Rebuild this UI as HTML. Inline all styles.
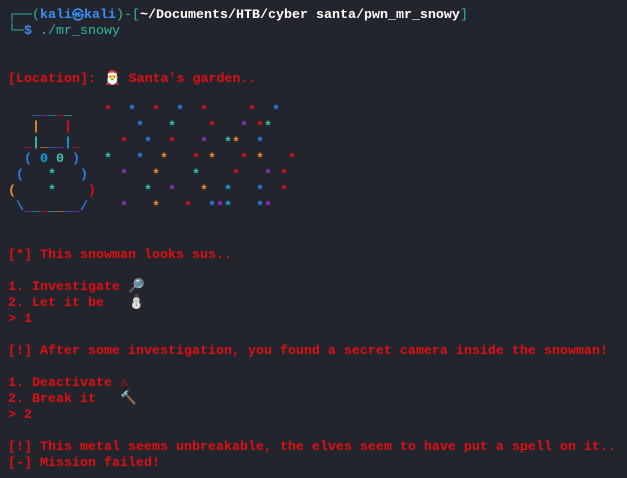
<!DOCTYPE html><html><head><style>
body{margin:0;width:627px;height:478px;background:#23252e;overflow:hidden;font-family:"Liberation Mono","DejaVu Sans Mono",monospace;font-size:13.33px}
pre{margin:0;position:absolute;left:8px;top:8px;line-height:16px;font-family:inherit;font-size:inherit;color:#e01010;font-weight:bold}
.g{color:#2fb89a;font-weight:normal}.b{color:#3a8ef0}.w{color:#fff}.n{font-weight:normal}
.s span{font-weight:bold}
.r{color:#e01010}.bl{color:#2a7fe8}.t{color:#3cc7a8}.o{color:#f09020}.p{color:#9030c0}.c{color:#10a0e0}
.k{display:inline-block;width:12px;font-size:12px;text-align:center;overflow:hidden;vertical-align:top}
</style></head><body><pre><span class="g">┌──(</span><span class="b">kali<span class="k">㉿</span>kali</span><span class="g">)-[</span><span class="w">~/Documents/HTB/cyber santa/pwn_mr_snowy</span><span class="g">]</span>
<span class="g">└─</span><span class="b">$</span><span class="g"> ./mr_snowy</span>


[Location]: 🎅 Santa's garden..

<span class="n s">   <span class="bl">_</span><span class="p">_</span><span class="c">_</span><span class="r">_</span><span class="t">_</span>    <span class="r">*</span>  <span class="bl">*</span>  <span class="r">*</span>  <span class="bl">*</span>  <span class="r">*</span>     <span class="r">*</span>  <span class="bl">*</span>
   <span class="o">|</span>   <span class="r">|</span>        <span class="bl">*</span>   <span class="t">*</span>    <span class="r">*</span>   <span class="p">*</span> <span class="r">*</span><span class="t">*</span>
  <span class="r">_</span><span class="t">|</span><span class="o">_</span><span class="bl">_</span><span class="p">_</span><span class="c">|</span><span class="r">_</span>     <span class="r">*</span>  <span class="bl">*</span>  <span class="r">*</span>   <span class="p">*</span>  <span class="t">*</span><span class="o">*</span>  <span class="bl">*</span>
  <span class="bl">(</span> <span class="c">0</span> <span class="t">0</span> <span class="bl">)</span>   <span class="t">*</span>   <span class="bl">*</span>  <span class="o">*</span>   <span class="r">*</span> <span class="o">*</span>   <span class="r">*</span> <span class="o">*</span>   <span class="r">*</span>
 <span class="bl">(</span>   <span class="t">*</span>   <span class="bl">)</span>    <span class="p">*</span>   <span class="o">*</span>    <span class="t">*</span>    <span class="r">*</span>   <span class="p">*</span> <span class="r">*</span>
<span class="o">(</span>    <span class="t">*</span>    <span class="r">)</span>      <span class="t">*</span>  <span class="p">*</span>   <span class="o">*</span>  <span class="c">*</span>   <span class="bl">*</span>  <span class="r">*</span>
 <span class="bl">\</span><span class="p">_</span><span class="c">_</span><span class="r">_</span><span class="t">_</span><span class="o">_</span><span class="bl">_</span><span class="p">_</span><span class="bl">/</span>    <span class="p">*</span>   <span class="o">*</span>   <span class="r">*</span>  <span class="bl">*</span><span class="p">*</span><span class="c">*</span>   <span class="bl">*</span><span class="p">*</span></span>


[*] This snowman looks sus..

1. Investigate <span style="color:#e8a030">🔎</span>
2. Let it be   <span class="n" style="color:#ddd">⛄</span>
&gt; 1

[!] After some investigation, you found a secret camera inside the snowman!

1. Deactivate ⚠
2. Break it   <span style="color:#9a8070">🔨</span>
&gt; 2

[!] This metal seems unbreakable, the elves seem to have put a spell on it..
[-] Mission failed!</pre></body></html>
